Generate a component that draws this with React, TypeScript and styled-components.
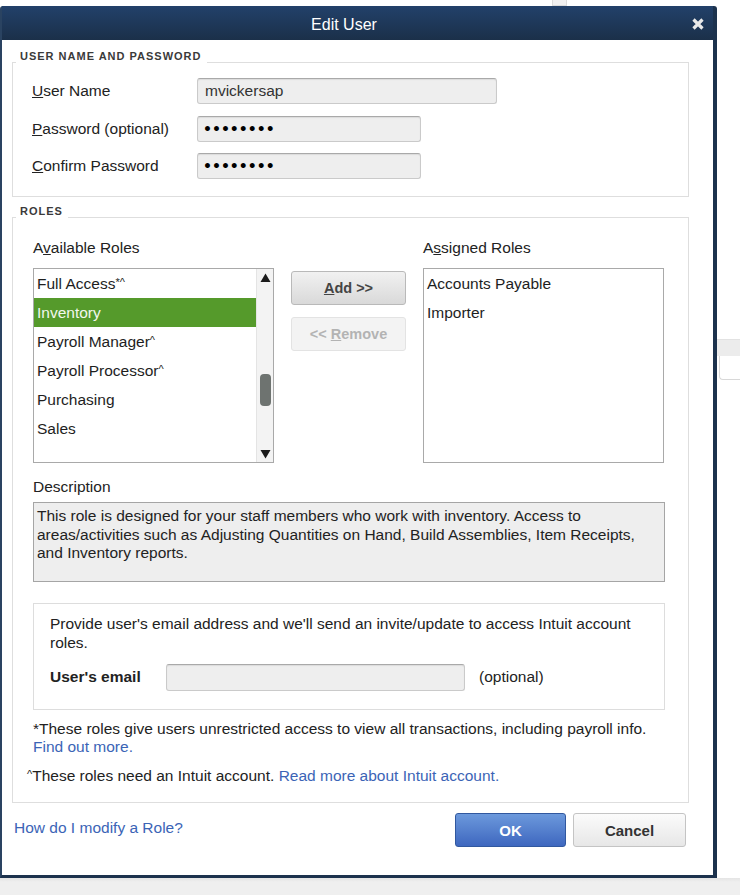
import React from 'react';
import styled, { createGlobalStyle } from 'styled-components';

const GlobalStyle = createGlobalStyle`
  html, body {
    margin: 0;
    padding: 0;
    background: #ffffff;
  }
  body {
    font-family: "Liberation Sans", Arial, sans-serif;
    color: #222;
  }
  * {
    box-sizing: border-box;
  }
`;

// page around the dialog
const Screen = styled.div`
  width: 740px;
  height: 895px;
  display: flex;
  flex-direction: column;
  overflow: hidden;
  background: #fff;
`;

const TopStrip = styled.div`
  flex: none;
  height: 6px;
  padding-left: 552px;
`;

const ScrollStub = styled.div`
  width: 15px;
  height: 6px;
  background: #f1f1f1;
  border: 1px solid #dcdcdc;
  border-top: none;
`;

const Middle = styled.div`
  flex: none;
  display: flex;
`;

const SideStrip = styled.div`
  flex: 1;
  padding-top: 333px;
`;

const SideBar = styled.div`
  height: 17px;
  background: #ececec;
  border-top: 1px solid #e2e2e2;
`;

const SidePanel = styled.div`
  height: 24px;
  margin-left: 2px;
  background: #fff;
  border: 1px solid #d8d8d8;
  border-top: none;
  border-right: none;
  border-radius: 0 0 0 4px;
`;

const BottomStrip = styled.div`
  flex: 1;
  background: linear-gradient(#e4e4e4, #efefef 4px, #efefef);
`;

// dialog frame
const Dialog = styled.div`
  width: 717px;
  height: 872px;
  display: flex;
  flex-direction: column;
  background: #fff;
  border-left: 2px solid #2a4361;
  border-right: 4px solid #1c324d;
  border-bottom: 3px solid #1c324d;
  border-radius: 3px 3px 0 0;
`;

const TitleBar = styled.div`
  height: 34px;
  flex: none;
  display: flex;
  align-items: center;
  background: linear-gradient(#22416a, #1b3049);
  color: #fff;
`;

const Title = styled.div`
  flex: 1;
  padding-top: 3px;
  text-align: center;
  font-size: 16px;
`;

const CloseButton = styled.button`
  width: 24px;
  height: 24px;
  margin: 2px 3px 0 0;
  padding: 0;
  border: 0;
  background: none;
  display: flex;
  align-items: center;
  justify-content: center;
`;

const Body = styled.div`
  flex: 1;
  display: flex;
  flex-direction: column;
  padding: 10px 24px 0 10px;
`;

// group boxes
const Group = styled.fieldset<{ $top?: number }>`
  margin: ${p => p.$top ?? 0}px 0 0 0;
  padding: 0;
  min-width: 0;
  border: 1px solid #dedede;
`;

const Legend = styled.legend`
  margin-left: 3px;
  padding: 0 5px 12px 4px;
  font-size: 11px;
  line-height: 13px;
  font-weight: bold;
  letter-spacing: 1px;
  text-transform: uppercase;
  color: #3a3a3a;
`;

const GroupInner = styled.div<{ $pad: string }>`
  padding: ${p => p.$pad};
  display: flex;
  flex-direction: column;
`;

// user name / password rows
const FormRow = styled.div<{ $gap?: number }>`
  display: grid;
  grid-template-columns: 165px auto;
  align-items: center;
  margin-top: ${p => p.$gap ?? 0}px;
`;

const FieldLabel = styled.label`
  font-size: 15.5px;
  color: #222;
`;

const TextField = styled.input<{ $w: number; $h?: number }>`
  width: ${p => p.$w}px;
  height: ${p => p.$h ?? 26}px;
  padding: 0 7px;
  border: 1px solid #cacaca;
  border-top-color: #a9a9a9;
  border-radius: 3px;
  background: #eeeeee;
  box-shadow: inset 0 1px 1px rgba(0, 0, 0, 0.08);
  font-family: "Liberation Sans", Arial, sans-serif;
  font-size: 15.5px;
  color: #333;
  outline: none;
`;

const SecretField = styled(TextField)`
  font-family: "DejaVu Sans", sans-serif;
  font-weight: bold;
  font-size: 14px;
  color: #000;
  padding-left: 5px;
`;

// roles
const RolesGrid = styled.div`
  display: grid;
  grid-template-columns: 241px 115px 241px;
  column-gap: 17px;
  row-gap: 11px;
`;

const ColumnLabel = styled.div<{ $col: number }>`
  grid-column: ${p => p.$col};
  font-size: 15.5px;
  line-height: 18px;
  color: #222;
`;

const ListBox = styled.div`
  height: 195px;
  display: flex;
  border: 1px solid #a9a9a9;
  background: #fff;
`;

const Items = styled.div`
  flex: 1;
  display: flex;
  flex-direction: column;
`;

const Item = styled.div<{ $selected?: boolean }>`
  height: 29px;
  line-height: 29px;
  padding-left: 3px;
  font-size: 15.5px;
  white-space: nowrap;
  color: ${p => (p.$selected ? '#f2f7ee' : '#1e1e1e')};
  background: ${p => (p.$selected ? '#559a2b' : 'transparent')};
`;

// the small caret / star marks after role names
const Mark = styled.span`
  font-size: 11px;
  vertical-align: 3px;
  line-height: 0;
`;

const ScrollTrack = styled.div`
  width: 17px;
  display: flex;
  flex-direction: column;
  align-items: center;
  background: #f3f3f3;
  border-left: 1px solid #e4e4e4;
`;

const Arrow = styled.div`
  height: 17px;
  display: flex;
  align-items: center;
  justify-content: center;
`;

const Thumb = styled.div<{ $offset: number }>`
  width: 11px;
  height: 32px;
  margin-top: ${p => p.$offset}px;
  margin-bottom: auto;
  border-radius: 4px;
  background: #6e7370;
`;

const MoveButtons = styled.div`
  padding-top: 3px;
  display: flex;
  flex-direction: column;
  gap: 12px;
`;

const MoveButton = styled.button<{ $disabled?: boolean }>`
  height: 34px;
  padding: 0;
  border-radius: 3px;
  border: 1px solid ${p => (p.$disabled ? '#e3e3e3' : '#b9b9b9')};
  background: ${p =>
    p.$disabled ? '#f3f3f3' : 'linear-gradient(#f1f1f1, #d9d9d9)'};
  font-family: "Liberation Sans", Arial, sans-serif;
  font-size: 14.5px;
  font-weight: bold;
  color: ${p => (p.$disabled ? '#b3b3b3' : '#444')};
`;

const DescLabel = styled.div`
  margin-top: 15px;
  font-size: 15.5px;
  line-height: 18px;
`;

const DescBox = styled.div`
  margin-top: 6px;
  height: 80px;
  padding: 4px 5px 0 3px;
  border: 1px solid #a5a5a5;
  background: #eeeeee;
  font-size: 15.5px;
  line-height: 18.5px;
  color: #222;
`;

const InviteBox = styled.div`
  margin-top: 21px;
  padding: 11px 17px 18px 16px;
  border: 1px solid #dddddd;
  font-size: 15.5px;
  line-height: 18.5px;
`;

const EmailRow = styled.div`
  margin-top: 12px;
  display: grid;
  grid-template-columns: 116px auto auto;
  justify-content: start;
  align-items: center;
`;

const EmailLabel = styled.label`
  font-weight: bold;
`;

const Optional = styled.span`
  margin-left: 14px;
`;

const Note = styled.p<{ $shift?: number; $top: number }>`
  margin: ${p => p.$top}px 0 0 ${p => -(p.$shift ?? 0)}px;
  font-size: 15.5px;
  line-height: 18px;
  color: #222;
`;

const Link = styled.a`
  color: #3b64b6;
  text-decoration: none;
`;

// bottom buttons
const Footer = styled.div`
  margin-top: 10px;
  padding: 0 3px 0 2px;
  display: flex;
  align-items: center;
  gap: 7px;
`;

const HelpLink = styled(Link)`
  flex: 1;
  font-size: 15.5px;
  padding-bottom: 4px;
`;

const DialogButton = styled.button<{ $primary?: boolean; $w: number }>`
  width: ${p => p.$w}px;
  height: 34px;
  padding: 0;
  border-radius: 3px;
  border: 1px solid ${p => (p.$primary ? '#31589f' : '#c4c4c4')};
  background: ${p =>
    p.$primary
      ? 'linear-gradient(#6c99dc, #3e67bf)'
      : 'linear-gradient(#fbfbfb, #e7e7e7)'};
  color: ${p => (p.$primary ? '#fff' : '#333')};
  font-family: "Liberation Sans", Arial, sans-serif;
  font-size: 15px;
  font-weight: bold;
`;

const CloseIcon = () => (
  <svg width="12" height="12" viewBox="0 0 12 12">
    <path d="M1.5 1.5 L10.5 10.5 M10.5 1.5 L1.5 10.5" stroke="#e9e9e9" strokeWidth="3.2" />
  </svg>
);

const UpArrow = () => (
  <svg width="11" height="10" viewBox="0 0 11 10">
    <polygon points="5.5,0.5 10.5,9 0.5,9" fill="#1a1a1a" />
  </svg>
);

const DownArrow = () => (
  <svg width="11" height="10" viewBox="0 0 11 10">
    <polygon points="0.5,1 10.5,1 5.5,9.5" fill="#1a1a1a" />
  </svg>
);

const availableRoles = [
  { name: 'Full Access', mark: '*^' },
  { name: 'Inventory', mark: '' },
  { name: 'Payroll Manager', mark: '^' },
  { name: 'Payroll Processor', mark: '^' },
  { name: 'Purchasing', mark: '' },
  { name: 'Sales', mark: '' },
];

const assignedRoles = ['Accounts Payable', 'Importer'];

const App: React.FC = () => {
  return (
    <Screen>
      <GlobalStyle />
      <TopStrip>
        <ScrollStub />
      </TopStrip>
      <Middle>
        <Dialog>
          <TitleBar>
            <Title>Edit User</Title>
            <CloseButton aria-label="Close">
              <CloseIcon />
            </CloseButton>
          </TitleBar>
          <Body>
            <Group>
              <Legend>User Name and Password</Legend>
              <GroupInner $pad="3px 0 17px 19px">
                <FormRow>
                  <FieldLabel><u>U</u>ser Name</FieldLabel>
                  <TextField $w={300} readOnly defaultValue="mvickersap" />
                </FormRow>
                <FormRow $gap={12}>
                  <FieldLabel><u>P</u>assword (optional)</FieldLabel>
                  <SecretField $w={224} type="password" readOnly defaultValue="password" />
                </FormRow>
                <FormRow $gap={11}>
                  <FieldLabel><u>C</u>onfirm Password</FieldLabel>
                  <SecretField $w={224} type="password" readOnly defaultValue="password" />
                </FormRow>
              </GroupInner>
            </Group>

            <Group $top={8}>
              <Legend>Roles</Legend>
              <GroupInner $pad="9px 23px 17px 20px">
                <RolesGrid>
                  <ColumnLabel $col={1}>A<u>v</u>ailable Roles</ColumnLabel>
                  <ColumnLabel $col={3}>A<u>s</u>signed Roles</ColumnLabel>
                  <ListBox>
                    <Items>
                      {availableRoles.map(role => (
                        <Item key={role.name} $selected={role.name === 'Inventory'}>
                          {role.name}
                          {role.mark && <Mark>{role.mark}</Mark>}
                        </Item>
                      ))}
                    </Items>
                    <ScrollTrack>
                      <Arrow><UpArrow /></Arrow>
                      <Thumb $offset={88} />
                      <Arrow><DownArrow /></Arrow>
                    </ScrollTrack>
                  </ListBox>
                  <MoveButtons>
                    <MoveButton><u>A</u>dd &gt;&gt;</MoveButton>
                    <MoveButton $disabled>&lt;&lt; <u>R</u>emove</MoveButton>
                  </MoveButtons>
                  <ListBox>
                    <Items>
                      {assignedRoles.map(role => (
                        <Item key={role}>{role}</Item>
                      ))}
                    </Items>
                  </ListBox>
                </RolesGrid>

                <DescLabel>Description</DescLabel>
                <DescBox>
                  This role is designed for your staff members who work with inventory. Access to
                  areas/activities such as Adjusting Quantities on Hand, Build Assemblies, Item Receipts,
                  and Inventory reports.
                </DescBox>

                <InviteBox>
                  Provide user's email address and we'll send an invite/update to access Intuit account
                  roles.
                  <EmailRow>
                    <EmailLabel>User's email</EmailLabel>
                    <TextField $w={299} $h={27} readOnly defaultValue="" />
                    <Optional>(optional)</Optional>
                  </EmailRow>
                </InviteBox>

                <Note $top={10}>
                  *These roles give users unrestricted access to view all transactions, including payroll
                  info. <Link href="#">Find out more.</Link>
                </Note>
                <Note $top={11} $shift={6}>
                  <Mark>^</Mark>These roles need an Intuit account.{' '}
                  <Link href="#">Read more about Intuit account.</Link>
                </Note>
              </GroupInner>
            </Group>

            <Footer>
              <HelpLink href="#">How do I modify a Role?</HelpLink>
              <DialogButton $primary $w={111}>OK</DialogButton>
              <DialogButton $w={113}>Cancel</DialogButton>
            </Footer>
          </Body>
        </Dialog>
        <SideStrip>
          <SideBar />
          <SidePanel />
        </SideStrip>
      </Middle>
      <BottomStrip />
    </Screen>
  );
};

export default App;
